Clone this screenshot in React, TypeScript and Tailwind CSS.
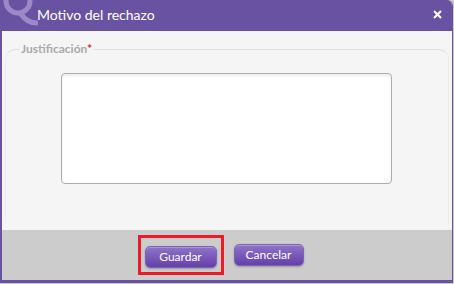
import React from 'react'

function Watermark() {
  return (
    <svg className="absolute left-0 top-0" width="36" height="31" viewBox="0 0 36 31">
      <circle cx="16" cy="1" r="12" fill="none" stroke="#9d89c8" strokeWidth="5" />
      <path d="M19 14 Q25 23 35 23" fill="none" stroke="#9d89c8" strokeWidth="5" strokeLinecap="round" />
    </svg>
  )
}

function PurpleButton({ label, width }: { label: string; width: string }) {
  return (
    <button
      className={`${width} h-[22px] rounded-[5px] border border-[#7d62b9] bg-gradient-to-b from-[#8f74c8] to-[#6440a8] text-white text-[12px] leading-none shadow-[0_1px_2px_rgba(0,0,0,0.25),inset_0_1px_0_rgba(255,255,255,0.25)]`}
    >
      {label}
    </button>
  )
}

export default function App() {
  return (
    <div className="w-[454px] h-[284px] bg-[#c9c9c9] font-['Lato',sans-serif]">
      <div className="w-[453px] h-[283px] flex flex-col border-l-2 border-r border-b-[3px] border-[#6a52a3] rounded-tr-[6px] overflow-hidden">
        <div className="relative h-[31px] shrink-0 bg-[#6a52a3] flex items-center">
          <Watermark />
          <span className="relative ml-[35px] -mt-[1px] text-white text-[14px] leading-none">Motivo del rechazo</span>
          <svg className="ml-auto mr-[10px] -mt-[3px]" width="9" height="9" viewBox="0 0 9 9">
            <path d="M1 1 L8 8 M8 1 L1 8" stroke="white" strokeWidth="2" />
          </svg>
        </div>

        <div className="flex-1 bg-[#f5f5f5] px-[3px] pt-[12px]">
          <fieldset className="border border-b-0 border-t-[#dedede] border-x-[#ececec] rounded-t-[10px] h-[180px] px-[13px]">
            <legend className="px-[2px] text-[12px] font-bold text-[#a9a9a9] leading-none">
              Justificación<span className="text-[#e02020]">*</span>
            </legend>
            <div className="flex justify-center pt-[18px] pr-[1px]">
              <textarea className="w-[331px] h-[111px] bg-white border border-[#adadad] rounded-[4px] shadow-[inset_0_2px_3px_rgba(0,0,0,0.08)] resize-none outline-none" />
            </div>
          </fieldset>
        </div>

        <div className="h-[50px] shrink-0 bg-[#cccccc] flex items-center justify-center gap-[10px] pr-[13px]">
          <div className="border-[3px] border-[#ed1c24] px-[4px] pt-[5px] pb-[4px]">
            <PurpleButton label="Guardar" width="w-[72px]" />
          </div>
          <PurpleButton label="Cancelar" width="w-[70px]" />
        </div>
      </div>
    </div>
  )
}
